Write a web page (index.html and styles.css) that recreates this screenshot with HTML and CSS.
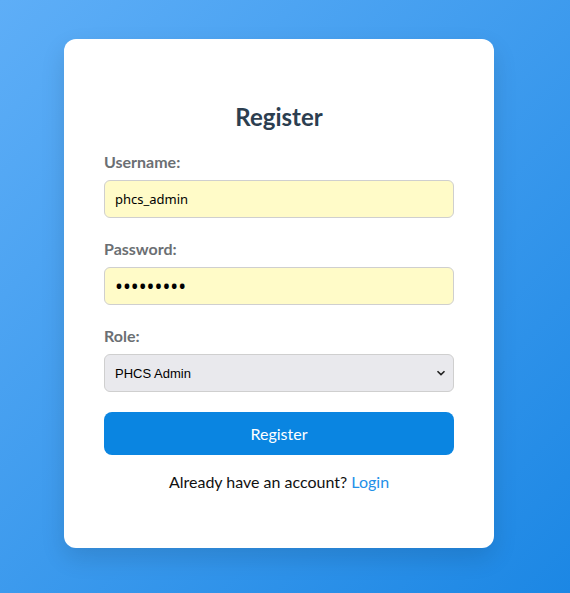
FILE: index.html
```html
<!DOCTYPE html>
<html lang="en">
<head>
<meta charset="utf-8">
<title>Register</title>
<link rel="stylesheet" href="styles.css">
</head>
<body>
<main class="page">
  <div class="card">
    <h2 class="title">Register</h2>
    <form class="form">
      <div class="group">
        <label class="label" for="u">Username:</label>
        <input class="field filled" id="u" type="text" value="phcs_admin">
      </div>
      <div class="group">
        <label class="label" for="p">Password:</label>
        <input class="field filled pass" id="p" type="password" value="123456789">
      </div>
      <div class="group">
        <label class="label" for="r">Role:</label>
        <div class="select-wrap">
          <select class="field select" id="r">
            <option>PHCS Admin</option>
          </select>
          <svg class="chev" width="10" height="6" viewBox="0 0 10 6"><path d="M1.5 1.2 L5 4.6 L8.5 1.2" fill="none" stroke="#222" stroke-width="1.6"/></svg>
        </div>
      </div>
      <button class="btn" type="button">Register</button>
    </form>
    <p class="foot">Already have an account? <a class="link" href="#">Login</a></p>
  </div>
</main>
</body>
</html>
```
FILE: styles.css
```css
* { box-sizing: border-box; }
html, body { margin: 0; padding: 0; }
body {
  min-height: 593px;
  background: linear-gradient(135deg, #5eaef7 0%, #1c87e4 100%);
  font-family: "Lato", "Open Sans", sans-serif;
}
.page {
  display: flex;
  justify-content: center;
  padding-top: 39px;
  padding-right: 12px;
}
.card {
  width: 430px;
  height: 509px;
  background: #fff;
  border-radius: 12px;
  padding: 40px;
  box-shadow: 0 10px 25px rgba(0, 0, 0, 0.12);
}
.title {
  margin: 22px 0 18px;
  text-align: center;
  font-size: 24px;
  line-height: 32px;
  font-weight: 700;
  color: #2c3e50;
}
.form { display: flex; flex-direction: column; }
.group { display: flex; flex-direction: column; margin-bottom: 20px; }
.label {
  font-size: 16px;
  line-height: 22px;
  font-weight: 700;
  color: #6b6f73;
  margin-bottom: 7px;
}
.field {
  width: 350px;
  height: 38px;
  border: 1px solid #cfcfcf;
  border-radius: 6px;
  padding: 0 10px;
  font-family: "Noto Sans", sans-serif;
  font-size: 13px;
  color: #000;
  outline: none;
}
.filled { background: #fffbc8; }
.pass { font-size: 21px; letter-spacing: 0; }
.select-wrap { position: relative; width: 350px; }
.select {
  appearance: none;
  -webkit-appearance: none;
  background: #e9e9ed;
  font-family: "Liberation Sans", Arial, sans-serif;
}
.chev { position: absolute; right: 8px; top: 16px; pointer-events: none; }
.btn {
  width: 350px;
  height: 43px;
  border: none;
  border-radius: 8px;
  background: #0a85e1;
  color: #fff;
  font-family: "Lato", "Open Sans", sans-serif;
  font-size: 16px;
}
.foot {
  margin: 16px 0 0;
  text-align: center;
  font-size: 16px;
  line-height: 22px;
  color: #111;
}
.link { color: #2390e8; text-decoration: none; }
```
